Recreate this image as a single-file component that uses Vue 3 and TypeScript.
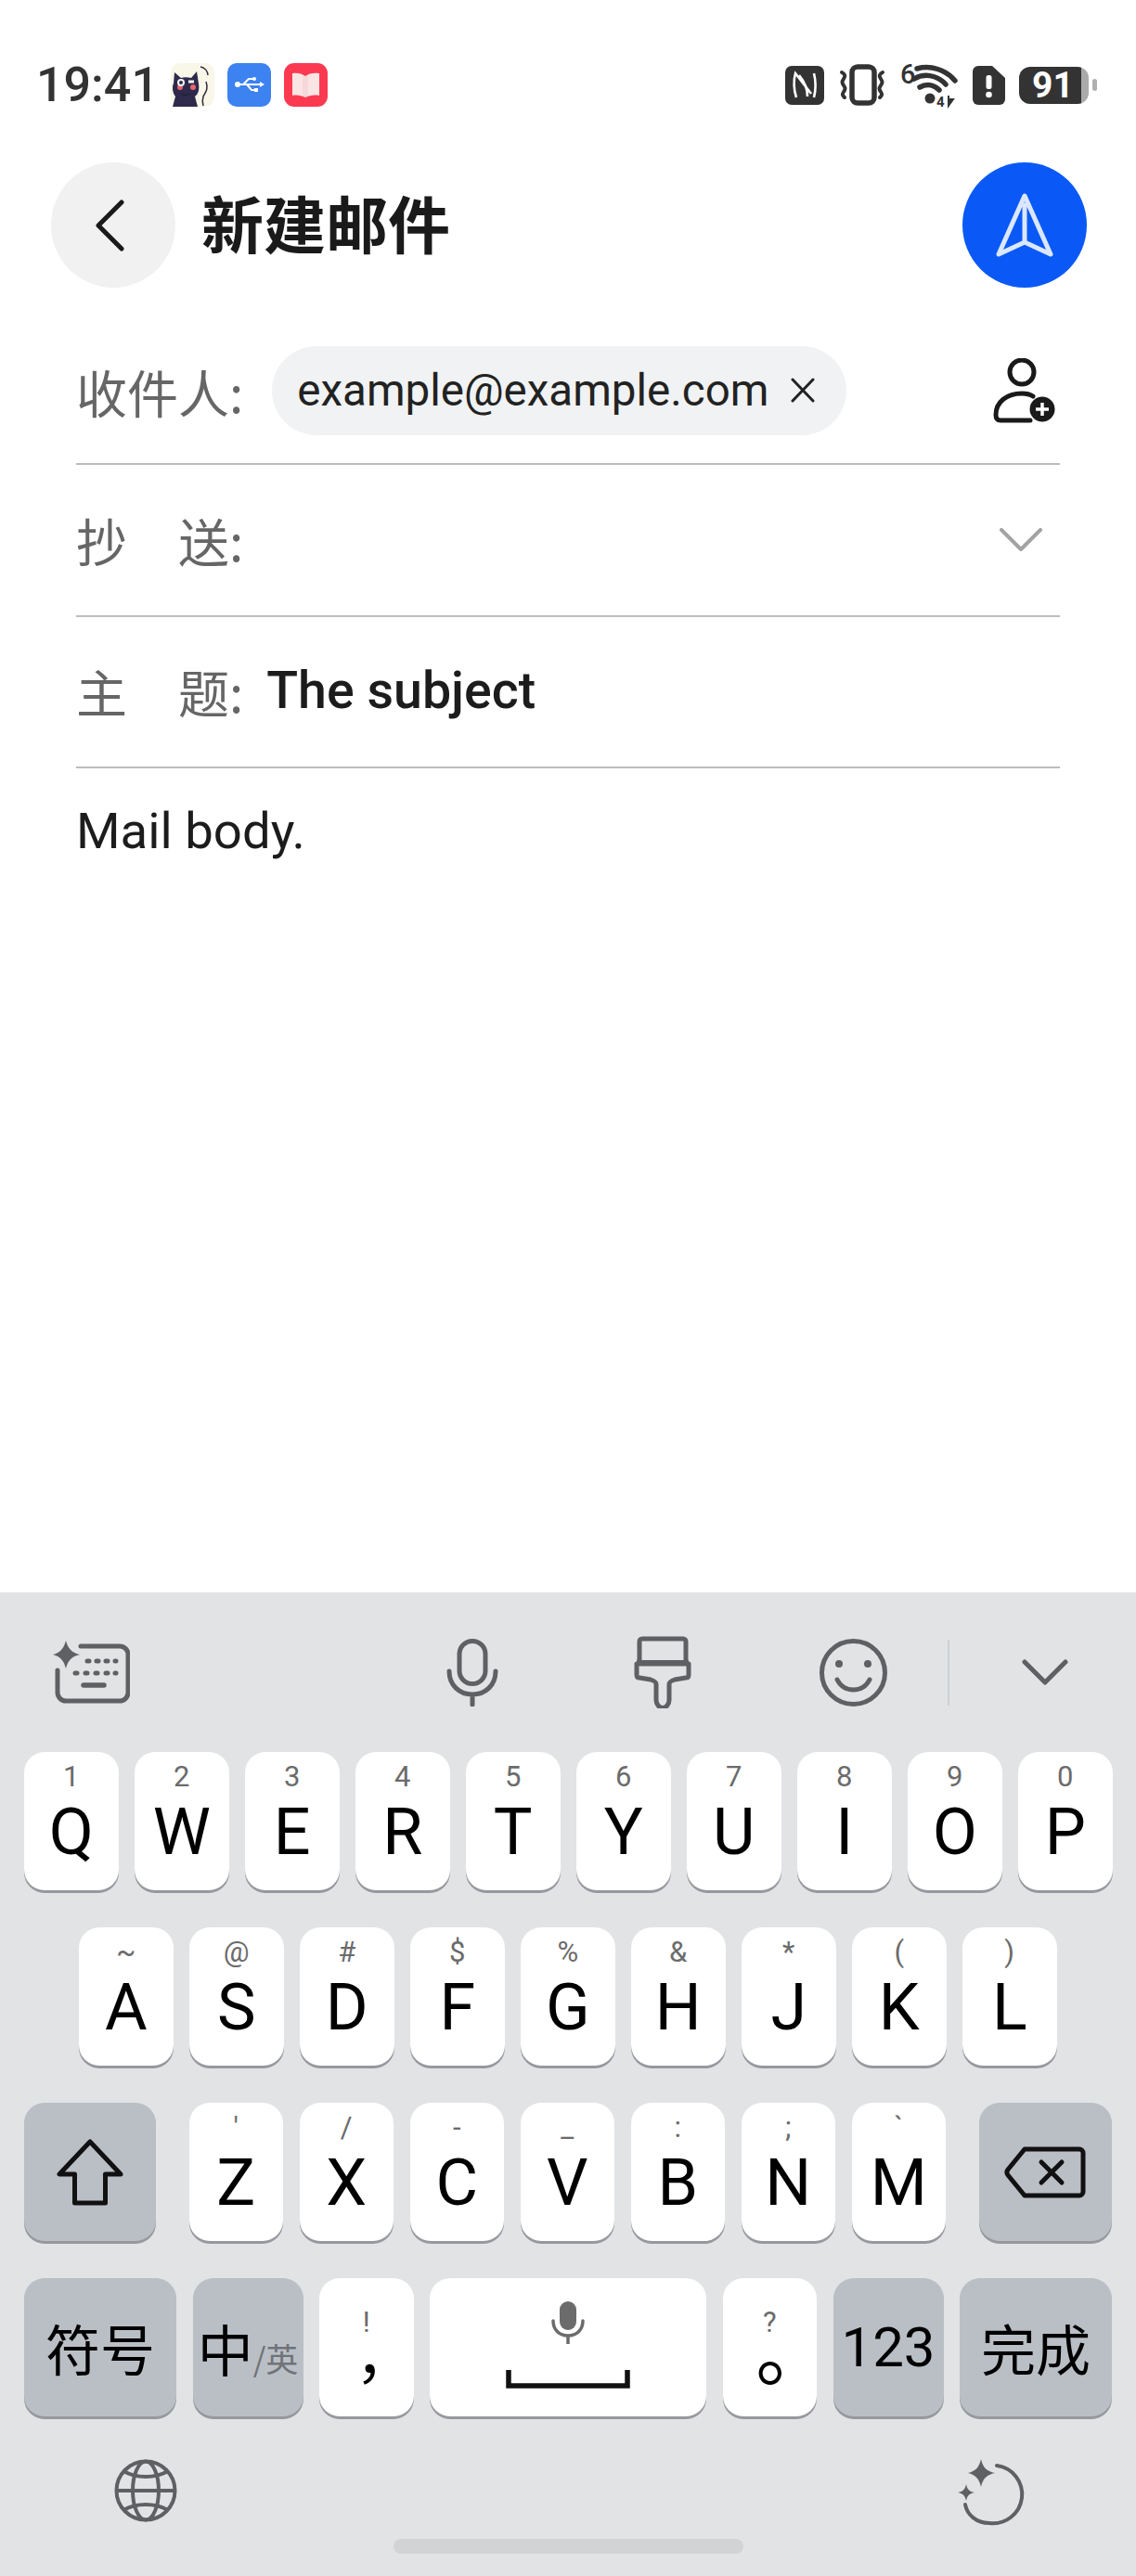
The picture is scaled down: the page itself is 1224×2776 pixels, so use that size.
<template>
  <div class="page">
    <div class="status">
      <span class="time">19:41</span>
      <svg class="notif" width="47" height="47" viewBox="0 0 47 47">
        <rect width="47" height="47" rx="10" fill="#f8f7e8" />
        <path d="M32 4c5 1 8 5 8 9M38 20c3 8-1 12-3 16-1 3-1 6 0 10" fill="none" stroke="#2d2b3e" stroke-width="1.5" />
        <path d="M4 10l7 6c3-1 7-1 11 0l6-7 2 13c1 6 0 11-4 14l3 11H2l3-11C2 32 1 26 3 22z" fill="#2e2a4c" />
        <circle cx="10" cy="26" r="3" fill="#e8656e" />
        <circle cx="24" cy="26" r="3" fill="#e8656e" />
        <circle cx="11" cy="21" r="4" fill="#f4f4f4" />
        <circle cx="11" cy="21" r="2" fill="#2e2a4c" />
        <path d="M19 20h6" stroke="#f4f4f4" stroke-width="3" />
        <path d="M11 33c3 2 7 2 10 0" fill="none" stroke="#1d1b30" stroke-width="1" />
      </svg>
      <svg class="notif" width="47" height="47" viewBox="0 0 47 47">
        <rect width="47" height="47" rx="10" fill="#3c82f0" />
        <path d="M10 23h27M17 23l6-6h5M21 23l5 6h4" fill="none" stroke="#fff" stroke-width="2" />
        <circle cx="11" cy="23" r="3" fill="#fff" />
        <path d="M35 20l5 3-5 3z" fill="#fff" />
        <circle cx="29" cy="17" r="2" fill="#fff" />
        <rect x="29" y="27" width="4" height="4" fill="#fff" />
      </svg>
      <svg class="notif" width="47" height="47" viewBox="0 0 47 47">
        <rect width="47" height="47" rx="11" fill="#fb3a52" />
        <path d="M9 11c5-1 10 0 14 3 4-3 9-4 15-3v24c-6-1-11 0-15 2-4-2-9-3-14-2z" fill="#fbe4e4" />
        <path d="M20 14h6v22h-6z" fill="#f5d3d5" opacity=".7" />
      </svg>
      <div class="status-right">
        <svg width="42" height="42" viewBox="0 0 42 42">
          <rect width="42" height="42" rx="7" fill="#333" />
          <path d="M12 34c-3-8-3-19-1-26l17 22" fill="none" stroke="#fff" stroke-width="2.6" />
          <path d="M31 8c2 8 2 18 0 26M15 10c5 6 9 14 9 23" fill="none" stroke="#fff" stroke-width="2.6" />
        </svg>
        <svg width="51" height="46" viewBox="0 0 51 46">
          <rect x="14" y="3" width="24" height="39" rx="6" fill="none" stroke="#333" stroke-width="5.5" />
          <path d="M3 9c4 2 4 4 2 7s-2 4 0 7 2 4 0 7-1 4 1 6" fill="none" stroke="#333" stroke-width="4" stroke-linecap="round" />
          <path d="M47 9c-4 2-4 4-2 7s2 4 0 7-2 4 0 7 1 4-1 6" fill="none" stroke="#333" stroke-width="4" stroke-linecap="round" />
        </svg>
        <svg class="wifi" width="62" height="60" viewBox="0 -7 62 60">
          <text x="0" y="21" class="wifi-six">6</text>
          <path d="M18 5c15-4 31 1 41 13" fill="none" stroke="#333" stroke-width="5.5" stroke-linecap="round" />
          <path d="M15 16c10-6 24-5 34 6" fill="none" stroke="#333" stroke-width="5.5" stroke-linecap="round" />
          <path d="M21 25c7-4 15-3 21 3" fill="none" stroke="#333" stroke-width="5.5" stroke-linecap="round" />
          <circle cx="32" cy="37" r="5.5" fill="#333" />
          <text x="39" y="46" class="wifi-four">4</text>
          <path d="M52 34v11M52 45l5-7h-5z" fill="#333" stroke="#333" stroke-width="2" />
        </svg>
        <svg width="35" height="42" viewBox="0 0 35 42">
          <path d="M6 0h15l14 13v23a6 6 0 0 1-6 6H6a6 6 0 0 1-6-6V6a6 6 0 0 1 6-6z" fill="#333" />
          <rect x="14.500" y="10" width="6" height="15" rx="2.500" fill="#fff" />
          <circle cx="17.500" cy="31" r="3.300" fill="#fff" />
        </svg>
        <div class="battery">
          <div class="battery-body"><span>91</span></div>
          <div class="battery-nub"></div>
        </div>
      </div>
    </div>

    <div class="header">
      <div class="back">
        <svg width="40" height="66" viewBox="0 0 40 66">
          <path d="M33 8L8 33l25 25" fill="none" stroke="#1a1a1a" stroke-width="5" stroke-linecap="round" stroke-linejoin="round" />
        </svg>
      </div>
      <div class="title">新建邮件</div>
      <div class="send">
        <svg width="66" height="74" viewBox="0 0 66 74">
          <path d="M33 5L61 68 33 55 5 68zM33 15V54" fill="none" stroke="#dbe7ff" stroke-width="5" stroke-linecap="round" stroke-linejoin="round" />
        </svg>
      </div>
    </div>

    <div class="form">
      <div class="row row-to">
        <span class="label">收件人:</span>
        <div class="chip">
          <span>example@example.com</span>
          <svg width="26" height="27" viewBox="0 0 26 27">
            <path d="M2 2l22 23M24 2L2 25" stroke="#222" stroke-width="3" stroke-linecap="round" />
          </svg>
        </div>
        <svg class="add-person" width="67" height="70" viewBox="0 0 67 70">
          <circle cx="31" cy="15" r="13" fill="none" stroke="#1a1a1a" stroke-width="5" />
          <path d="M43 41c-3-2-7-3-12-3C15 38 3 47 3 61c0 4 2 6 5 6h32" fill="none" stroke="#1a1a1a" stroke-width="5" stroke-linecap="round" />
          <circle cx="53" cy="55" r="13.500" fill="#1a1a1a" />
          <path d="M53 48v14M46 55h14" stroke="#fff" stroke-width="3.500" />
        </svg>
      </div>
      <div class="row row-cc">
        <span class="label">抄　送:</span>
        <svg class="cc-arrow" width="46" height="26" viewBox="0 0 46 26">
          <path d="M2 2l21 21L44 2" fill="none" stroke="#a3a3a3" stroke-width="4" stroke-linecap="round" stroke-linejoin="round" />
        </svg>
      </div>
      <div class="row row-sub">
        <span class="label">主　题:</span>
        <span class="subject">The subject</span>
      </div>
      <div class="mail-body">Mail body.</div>
    </div>

    <div class="keyboard">
      <div class="toolbar">
        <svg class="tb-ai" width="83" height="68" viewBox="0 0 83 68">
          <path d="M30 6h42a9 9 0 0 1 9 9v41a9 9 0 0 1-9 9H14a9 9 0 0 1-9-9V32" fill="none" stroke="#5f6063" stroke-width="5" stroke-linecap="round" />
          <path d="M14 0c2 8 6 13 15 15-9 2-13 7-15 15-2-8-6-13-14-15 8-2 12-7 14-15z" fill="#5f6063" />
          <path d="M37 22h2M47 22h2M57 22h2M67 22h1M24 35h2M35 35h2M46 35h2M57 35h2M67 35h1" stroke="#5f6063" stroke-width="5" stroke-linecap="round" />
          <path d="M33 48h22" stroke="#5f6063" stroke-width="5.500" stroke-linecap="round" />
        </svg>
        <svg class="tb-mic" width="56" height="73" viewBox="0 0 56 73">
          <rect x="14" y="2.500" width="28" height="46" rx="14" fill="none" stroke="#5f6063" stroke-width="5" />
          <path d="M3 35c0 15 11 25 25 25s25-10 25-25M28 60v11" fill="none" stroke="#5f6063" stroke-width="5" stroke-linecap="round" />
        </svg>
        <svg class="tb-brush" width="62" height="78" viewBox="0 0 62 78">
          <path d="M6 30V6a3 3 0 0 1 3-3h44a3 3 0 0 1 3 3v24" fill="none" stroke="#5f6063" stroke-width="5" />
          <path d="M3 30h56v12c0 2-1 3-3 3l-12 2c-3 1-6 2-6 5v17a5 6 0 0 1-14 0V52c0-3-3-4-6-5L6 45c-2 0-3-1-3-3z" fill="none" stroke="#5f6063" stroke-width="5" stroke-linejoin="round" />
          <path d="M3 29h56" stroke="#5f6063" stroke-width="6" />
        </svg>
        <svg class="tb-smile" width="73" height="73" viewBox="0 0 73 73">
          <circle cx="36.500" cy="36.500" r="34" fill="none" stroke="#5f6063" stroke-width="5" />
          <circle cx="21" cy="27" r="4" fill="#5f6063" />
          <circle cx="52" cy="27" r="4" fill="#5f6063" />
          <path d="M19 44c4 8 10 11 17.500 11S50 52 54 44" fill="none" stroke="#5f6063" stroke-width="5" stroke-linecap="round" />
        </svg>
        <div class="tb-div"></div>
        <svg class="tb-down" width="50" height="28" viewBox="0 0 50 28">
          <path d="M3 3l22 22L47 3" fill="none" stroke="#5f6063" stroke-width="5" stroke-linecap="round" stroke-linejoin="round" />
        </svg>
      </div>

      <div class="keys">
        <div class="key-row row1">
          <div v-for="k in row1" :key="k[1]" class="key">
            <span class="hint">{{ k[0] }}</span>
            <span class="cap">{{ k[1] }}</span>
          </div>
        </div>
        <div class="key-row row2">
          <div v-for="k in row2" :key="k[1]" class="key">
            <span class="hint">{{ k[0] }}</span>
            <span class="cap">{{ k[1] }}</span>
          </div>
        </div>
        <div class="key-row row3">
          <div class="key fn shift">
            <svg width="72" height="72" viewBox="0 0 72 72">
              <path d="M36 3L3 38h16.500v31h33V38H69z" fill="none" stroke="#111" stroke-width="5" stroke-linejoin="round" />
            </svg>
          </div>
          <div v-for="k in row3" :key="k[1]" class="key">
            <span class="hint">{{ k[0] }}</span>
            <span class="cap">{{ k[1] }}</span>
          </div>
          <div class="key fn del">
            <svg width="88" height="56" viewBox="0 0 88 56">
              <path d="M22 3h59a4 4 0 0 1 4 4v42a4 4 0 0 1-4 4H22L4 31a5 5 0 0 1 0-6z" fill="none" stroke="#111" stroke-width="5" stroke-linejoin="round" />
              <path d="M40 17l22 22M62 17L40 39" stroke="#111" stroke-width="5" stroke-linecap="round" />
            </svg>
          </div>
        </div>
        <div class="key-row row4">
          <div class="key fn wide cjk">符号</div>
          <div class="key fn mid lang"><span class="zh">中</span><span class="en">/英</span></div>
          <div class="key punct-key">
            <span class="hint">!</span>
            <span class="cap punct comma">，</span>
          </div>
          <div class="key space">
            <svg class="space-mic" width="36" height="46" viewBox="0 0 36 46">
              <rect x="9" y="0" width="18" height="31" rx="9" fill="#6b6b6b" />
              <path d="M2 21c0 10 7 16 16 16s16-6 16-16M18 37v9" fill="none" stroke="#6b6b6b" stroke-width="3.500" stroke-linecap="round" />
            </svg>
            <svg class="space-bar" width="134" height="20" viewBox="0 0 134 20">
              <path d="M3 0v17h128V0" fill="none" stroke="#111" stroke-width="5.500" />
            </svg>
          </div>
          <div class="key punct-key">
            <span class="hint">?</span>
            <span class="cap punct period">。</span>
          </div>
          <div class="key fn mid num">123</div>
          <div class="key fn wide cjk">完成</div>
        </div>
      </div>

      <div class="bottom">
        <svg width="68" height="68" viewBox="0 0 68 68">
          <g fill="none" stroke="#5f6063" stroke-width="4">
            <circle cx="34" cy="34" r="31.500" />
            <ellipse cx="34" cy="34" rx="14" ry="31.500" />
            <path d="M2.500 34h63M10 13c14 8 34 8 48 0M10 55c14-8 34-8 48 0" />
          </g>
        </svg>
        <svg width="73" height="73" viewBox="0 0 73 73">
          <path d="M42 7a31 31 0 0 1-8 62c-14 0-24-9-26-20" fill="none" stroke="#5f6063" stroke-width="4" stroke-linecap="round" />
          <path d="M25 0c2 9 6 13 15 15-9 2-13 6-15 15-2-9-6-13-14-15 8-2 12-6 14-15z" fill="#5f6063" />
          <path d="M9 27c1 5 3 8 9 9-6 1-8 4-9 9-1-5-3-8-9-9 6-1 8-4 9-9z" fill="#5f6063" />
        </svg>
      </div>
      <div class="home-bar"></div>
    </div>
  </div>
</template>

<script setup lang="ts">
const row1: [string, string][] = [
  ['1', 'Q'], ['2', 'W'], ['3', 'E'], ['4', 'R'], ['5', 'T'],
  ['6', 'Y'], ['7', 'U'], ['8', 'I'], ['9', 'O'], ['0', 'P']
]
const row2: [string, string][] = [
  ['~', 'A'], ['@', 'S'], ['#', 'D'], ['$', 'F'], ['%', 'G'],
  ['&', 'H'], ['*', 'J'], ['(', 'K'], [')', 'L']
]
const row3: [string, string][] = [
  ["'", 'Z'], ['/', 'X'], ['-', 'C'], ['_', 'V'], [':', 'B'], [';', 'N'], ['`', 'M']
]
</script>

<style>
html, body { margin: 0; background: #fff; }
</style>

<style scoped>
.page {
  width: 1224px;
  height: 2776px;
  display: flex;
  flex-direction: column;
  background: #fff;
  font-family: Roboto, "Noto Sans CJK SC", sans-serif;
  overflow: hidden;
  position: relative;
}

.status {
  display: flex;
  align-items: center;
  height: 47px;
  margin-top: 68px;
  padding: 0 42px 0 39px;
}
.time {
  font-size: 52px;
  font-weight: 500;
  color: #333;
  width: 145px;
  line-height: 47px;
}
.notif { margin-right: 14px; }
.status-right {
  margin-left: auto;
  display: flex;
  align-items: center;
  gap: 15.500px;
}
.wifi { margin: -7px 0; }
.wifi-six { font: 500 29px Roboto, sans-serif; fill: #333; }
.wifi-four { font: 700 15px Roboto, sans-serif; fill: #333; }
.battery { display: flex; align-items: center; gap: 4px; }
.battery-body {
  width: 75px;
  height: 40px;
  border-radius: 12px;
  background: linear-gradient(90deg, #333 0, #333 67px, #aaa 67px);
  color: #fff;
  font-size: 39px;
  font-weight: 700;
  line-height: 40px;
  padding-left: 14px;
  box-sizing: border-box;
}
.battery-nub { width: 5px; height: 13px; border-radius: 3px; background: #b0b0b0; }

.header {
  display: flex;
  align-items: center;
  height: 135px;
  margin-top: 60px;
  padding: 0 53px 0 55px;
}
.back, .send {
  width: 134px;
  height: 135px;
  border-radius: 50%;
  display: flex;
  align-items: center;
  justify-content: center;
  flex-shrink: 0;
}
.back { background: #f1f1f1; }
.back svg { margin-right: 8px; }
.send { background: #0a59f7; margin-left: auto; }
.title {
  margin-left: 28px;
  margin-bottom: 8px;
  font-family: "Noto Sans CJK SC", sans-serif;
  font-size: 67px;
  font-weight: 700;
  color: #1a1a1a;
  line-height: 80px;
}

.form {
  margin-top: 32px;
  padding: 0 82px;
}
.row {
  display: flex;
  align-items: center;
  border-bottom: 2px solid #bdbdbd;
  box-sizing: border-box;
}
.row-to { height: 159px; }
.row-cc { height: 164px; padding-bottom: 3px; }
.row-sub { height: 163px; padding-bottom: 3px; }
.label {
  font-family: "Noto Sans CJK SC", sans-serif;
  font-size: 55px;
  font-weight: 400;
  color: #666;
  white-space: pre;
  flex-shrink: 0;
}
.chip {
  display: flex;
  align-items: center;
  height: 96px;
  margin-left: 31px;
  padding: 0 34px 0 27px;
  gap: 24px;
  border-radius: 48px;
  background: #f1f2f3;
  font-size: 47.500px;
  color: #222;
  white-space: nowrap;
}
.add-person { margin-left: auto; margin-right: 5px; }
.cc-arrow { margin-left: auto; margin-right: 19px; margin-top: 2px; }
.subject {
  margin-left: 25px;
  font-size: 55.500px;
  font-weight: 500;
  color: #1c1c1c;
  white-space: nowrap;
}
.mail-body {
  margin-top: 35px;
  font-size: 54.500px;
  line-height: 64px;
  color: #1c1c1c;
}

.keyboard {
  margin-top: auto;
  height: 1060px;
  background: #e1e3e5;
  position: relative;
  display: flex;
  flex-direction: column;
}
.toolbar {
  display: flex;
  align-items: center;
  height: 172px;
  flex-shrink: 0;
  padding-left: 57px;
}
.tb-mic { margin-left: 341px; }
.tb-brush { margin-left: 146px; }
.tb-smile { margin-left: 138px; }
.tb-div { width: 2px; height: 71px; margin-left: 65px; background: #cdd0d3; }
.tb-down { margin-left: 78px; }

.keys { display: flex; flex-direction: column; gap: 40px; }
.key-row { display: flex; gap: 17.500px; padding-left: 26px; }
.row2 { padding-left: 85px; }
.row3 .shift { margin-right: 18px; }
.row3 .del { margin-left: 18px; }
.key {
  width: 101.500px;
  height: 149px;
  flex-shrink: 0;
  border-radius: 22px;
  background: #fff;
  box-shadow: 0 3px 0 #96989e;
  display: flex;
  flex-direction: column;
  align-items: center;
  color: #000;
}
.fn {
  background: #babfc6;
  flex-direction: row;
  justify-content: center;
}
.hint {
  font-size: 31px;
  line-height: 53px;
  height: 53px;
  color: #6b6b6b;
}
.cap {
  font-size: 70px;
  line-height: 66px;
  height: 66px;
}
.punct-key .hint { margin-top: 21px; }
.punct { font-family: "Noto Sans CJK SC", sans-serif; }
.comma { padding-left: 40px; margin-top: -28px; font-size: 64px; }
.period { padding-left: 50px; margin-top: -33px; font-size: 80px; }
.shift { width: 142px; }
.del { width: 143px; }
.wide {
  width: 164px;
  font-family: "Noto Sans CJK SC", sans-serif;
  font-size: 59px;
  line-height: 149px;
}
.mid { width: 119px; }
.lang { align-items: baseline; font-family: "Noto Sans CJK SC", sans-serif; line-height: 149px; }
.zh { font-size: 60px; }
.en { font-size: 35px; color: #707378; }
.num { font-size: 60px; line-height: 153px; }
.shift, .del { align-items: center; }
.space {
  width: 298px;
  position: relative;
}
.space-mic { margin-top: 25px; }
.space-bar { margin-top: 28px; }

.bottom {
  display: flex;
  justify-content: space-between;
  align-items: flex-start;
  padding: 46px 119px 0 123px;
}
.home-bar {
  position: absolute;
  left: 424px;
  bottom: 24px;
  width: 377px;
  height: 16px;
  border-radius: 8px;
  background: #d1d3d5;
}
</style>
